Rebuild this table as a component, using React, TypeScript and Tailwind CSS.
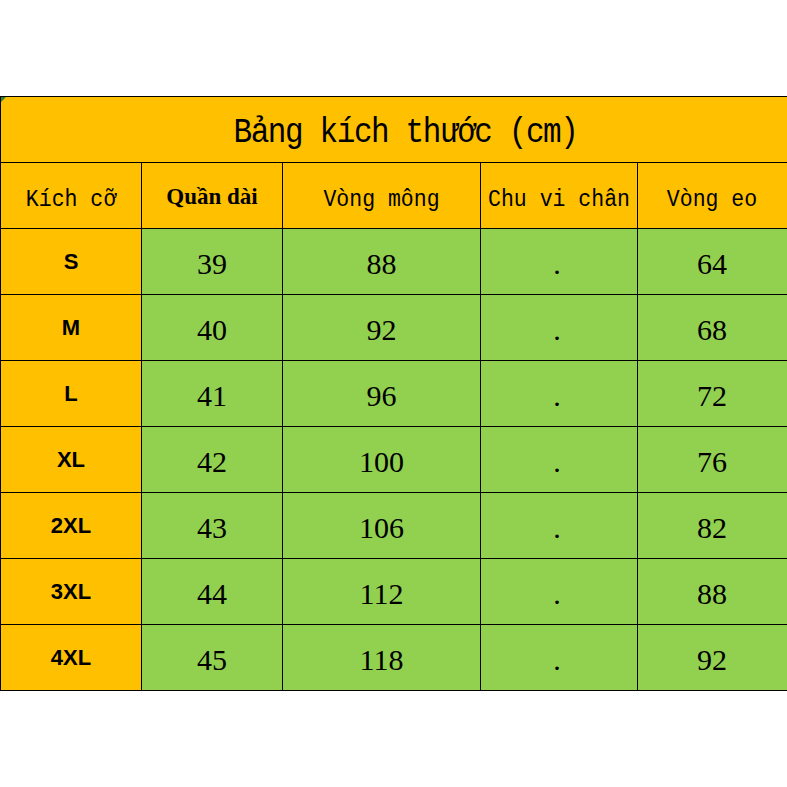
import React from 'react';

const rows = [
    { size: 'S', len: '39', hip: '88', waist: '64' },
    { size: 'M', len: '40', hip: '92', waist: '68' },
    { size: 'L', len: '41', hip: '96', waist: '72' },
    { size: 'XL', len: '42', hip: '100', waist: '76' },
    { size: '2XL', len: '43', hip: '106', waist: '82' },
    { size: '3XL', len: '44', hip: '112', waist: '88' },
    { size: '4XL', len: '45', hip: '118', waist: '92' },
];

const cell = 'h-[66px] flex items-center justify-center border-r border-b border-black';
const mono = "font-['Liberation_Mono','DejaVu_Sans_Mono',monospace]";
const serif = "font-['Liberation_Serif','DejaVu_Serif',serif]";
const sans = "font-['Liberation_Sans',Arial,sans-serif]";
const head = `${cell} bg-[#FFC000] text-[21.5px] pt-2 ${mono}`;
const num = `${cell} bg-[#92D050] text-[30px] pt-1 ${serif}`;

const App: React.FC = () => {
    return (
        <div className="w-[787px] h-[787px] bg-white overflow-hidden">
            <div className="mt-[96px] w-[800px] relative border-t border-l border-black text-black">
                <div className="absolute left-0 top-0 w-[5px] h-[5px] bg-[#2e7d32] [clip-path:polygon(0_0,100%_0,0_100%)]" />
                <div className={`${cell} bg-[#FFC000] pl-[11px] pt-2`}>
                    <span className={`inline-block scale-y-[1.15] text-[31px] tracking-[-1.4px] ${mono}`}>Bảng kích thước (cm)</span>
                </div>
                <div className="grid grid-cols-[141px_141px_198px_157px_162px]">
                    <div className={head}><span className="inline-block scale-y-[1.1]">Kích cỡ</span></div>
                    <div className={`${cell} bg-[#FFC000] text-[23px] font-bold pt-1 ${serif}`}>Quần dài</div>
                    <div className={head}><span className="inline-block scale-y-[1.1]">Vòng mông</span></div>
                    <div className={head}><span className="inline-block scale-y-[1.1]">Chu vi chân</span></div>
                    <div className={`${head} pr-[13px]`}><span className="inline-block scale-y-[1.1]">Vòng eo</span></div>
                    {rows.map(r => (
                        <React.Fragment key={r.size}>
                            <div className={`${cell} bg-[#FFC000] text-[22px] font-bold ${sans}`}>{r.size}</div>
                            <div className={num}>{r.len}</div>
                            <div className={num}>{r.hip}</div>
                            <div className={`${num} pr-1`}>.</div>
                            <div className={`${num} pr-[13px]`}>{r.waist}</div>
                        </React.Fragment>
                    ))}
                </div>
            </div>
        </div>
    );
};

export default App;
